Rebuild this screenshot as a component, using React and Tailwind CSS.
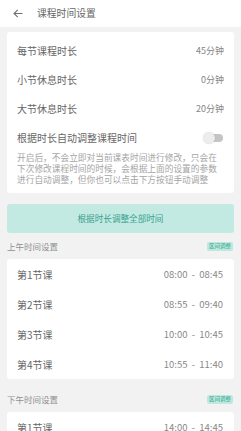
import React from "react";

const font = { fontFamily: '"Noto Sans CJK SC", "Noto Sans", sans-serif' };

function Row({ label, value }) {
  return (
    <div className="h-[29px] px-[10px] flex items-center justify-between">
      <span className="text-[10px] text-[#666666]">{label}</span>
      <span className="text-[9px] text-[#858585]">{value}</span>
    </div>
  );
}

function TimeRow({ label, start, end }) {
  return (
    <div className="h-[30px] pl-[10px] pr-[11px] flex items-center justify-between">
      <span className="text-[10px] text-[#666666]">{label}</span>
      <span className="text-[9.5px] text-[#888888] whitespace-pre">{start}  -  {end}</span>
    </div>
  );
}

function SectionLabel({ text, className }) {
  return (
    <div className={"h-[26px] flex items-center justify-between " + className}>
      <span className="text-[8.5px] text-[#909090]">{text}</span>
      <span className="bg-[#bfe9df] text-[#35a893] text-[5.5px] leading-[9px] px-[2px] rounded-[2px] mr-[1px]">区间调整</span>
    </div>
  );
}

export default function App() {
  return (
    <div className="w-[241px] h-[431px] overflow-hidden bg-[#f2f2f2]" style={font}>
      <div className="h-[27px] bg-white flex items-center">
        <svg width="10" height="9" viewBox="0 0 10 9" className="ml-[13px]" fill="none" stroke="#707070" strokeWidth="1.1">
          <path d="M9.5 4.5H1M4.8 0.8L1 4.5L4.8 8.2" />
        </svg>
        <span className="ml-[14px] text-[9.8px] text-[#666666]">课程时间设置</span>
      </div>
      <div className="px-[7px]">
        <div className="mt-[5px] bg-white rounded-[3px] pt-[4px] pb-[8px]">
          <Row label="每节课程时长" value="45分钟" />
          <Row label="小节休息时长" value="0分钟" />
          <Row label="大节休息时长" value="20分钟" />
          <div className="h-[29px] px-[10px] flex items-center justify-between">
            <span className="text-[10px] text-[#666666]">根据时长自动调整课程时间</span>
            <div className="relative w-[20px] h-[12px] mr-[1px] flex items-center">
              <div className="absolute left-[4px] right-0 h-[8px] rounded-full bg-[#c4c4c4]" />
              <div className="absolute left-0 w-[12px] h-[12px] rounded-full bg-[#ededed] shadow-[0_0_1px_rgba(0,0,0,0.2)]" />
            </div>
          </div>
          <div className="px-[10px] text-[8.7px] leading-[11px] text-[#a5a5a5] whitespace-nowrap">
            <div>开启后，不会立即对当前课表时间进行修改，只会在</div>
            <div>下次修改课程时间的时候，会根据上面的设置的参数</div>
            <div>进行自动调整，但你也可以点击下方按钮手动调整</div>
          </div>
        </div>
        <div className="mt-[11px] h-[29px] rounded-[3px] bg-[#c3eae2] flex items-center justify-center">
          <span className="text-[8.6px] text-[#3aa090]">根据时长调整全部时间</span>
        </div>
        <SectionLabel text="上午时间设置" className="" />
        <div className="bg-white rounded-[3px]">
          <TimeRow label="第1节课" start="08:00" end="08:45" />
          <TimeRow label="第2节课" start="08:55" end="09:40" />
          <TimeRow label="第3节课" start="10:00" end="10:45" />
          <TimeRow label="第4节课" start="10:55" end="11:40" />
        </div>
        <SectionLabel text="下午时间设置" className="mt-[7px]" />
        <div className="bg-white rounded-[3px]">
          <TimeRow label="第1节课" start="14:00" end="14:45" />
          <TimeRow label="第2节课" start="14:55" end="15:40" />
        </div>
      </div>
    </div>
  );
}
